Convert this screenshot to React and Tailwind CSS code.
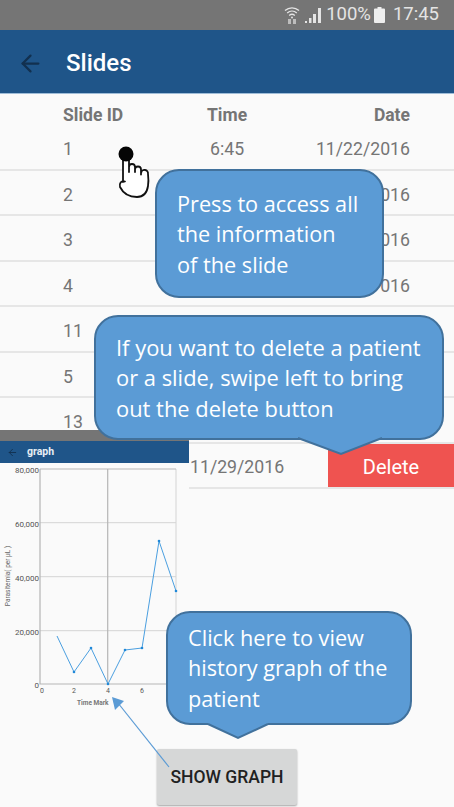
import { ArrowLeft } from "lucide-react";

const roboto = { fontFamily: "Roboto, sans-serif" };

// dates of rows 2-4 are mostly behind the first callout, only the tail shows
const rows = [
  { id: "1", time: "6:45", date: "11/22/2016" },
  { id: "2", date: "016" },
  { id: "3", date: "016" },
  { id: "4", date: "016" },
  { id: "11" },
  { id: "5" },
  { id: "13" },
];

const points = [[57, 636], [74, 672], [91, 648], [108, 684], [125, 650], [142, 648], [159, 541], [176, 591]];

const StatusBar = () => (
  <div className="h-[30px] bg-[#757575] flex items-center justify-end pr-[15px] text-[18.500px] text-[#e4e4e4]">
    <svg width="16" height="20" viewBox="0 0 16 20" fill="none" stroke="#e4e4e4" strokeWidth="1.3" className="mr-[5px]">
      <path d="M1 5.5c4-3.6 10-3.6 14 0M3.2 8c2.8-2.4 6.8-2.4 9.6 0M5.2 10.4c1.700-1.400 3.900-1.400 5.600 0" />
      <path d="M5.500 14v5M10.500 14v5" strokeWidth="3" stroke="#bdbdbd" />
      <circle cx="8" cy="12.500" r="1" fill="#e4e4e4" stroke="none" />
    </svg>
    <svg width="16" height="16" viewBox="0 0 16 16" fill="#e4e4e4" className="mr-[5px]">
      <path d="M0 14h2v2H0zM4 11h2.500v5H4zM8 7h3v9H8zM13 1h3v15h-3z" />
    </svg>
    <span className="mr-[3px]">100%</span>
    <svg width="11" height="16" viewBox="0 0 11 16" fill="#eeeeee" className="mr-[8px]">
      <path d="M3.500 0h4v1.500H10a1 1 0 0 1 1 1V15a1 1 0 0 1-1 1H1a1 1 0 0 1-1-1V2.500a1 1 0 0 1 1-1h2.500z" />
    </svg>
    <span>17:45</span>
  </div>
);

const Bubble = ({ className, textClass, tail, children }) => (
  <div className={`absolute bg-[#5b9bd5] border-2 border-[#41719c] text-white leading-[30.300px] ${className}`} style={{ fontFamily: "'Open Sans', sans-serif" }}>
    <div className={textClass}>{children}</div>
    {tail}
  </div>
);

const Chart = () => (
  <svg width="189" height="290" viewBox="0 463 189 290" className="block" style={roboto}>
    <path d="M40 522.700H176M40 576.700H176M40 630.700H176M176 469V684" stroke="#d4d4d4" strokeWidth="1" fill="none" />
    <path d="M40 469H176M40 469V684H176M107.700 469V684" stroke="#b5b5b5" strokeWidth="1.200" fill="none" />
    <polyline points={points.map((p) => p.join(",")).join(" ")} fill="none" stroke="#4a9fe0" strokeWidth="1" />
    {points.slice(1).map((p) => (
      <circle key={p[0]} cx={p[0]} cy={p[1]} r="1.300" fill="#1f88d8" />
    ))}
    <g fontSize="8" fill="#555" textAnchor="end">
      <text x="39" y="473">80,000</text>
      <text x="39" y="527">60,000</text>
      <text x="39" y="581">40,000</text>
      <text x="39" y="635">20,000</text>
      <text x="39" y="688">0</text>
    </g>
    <g fontSize="7" fill="#555" textAnchor="middle">
      <text x="42" y="693">0</text>
      <text x="74" y="693">2</text>
      <text x="108" y="693">4</text>
      <text x="142" y="693">6</text>
    </g>
    <text x="77" y="705" fontSize="6.500" fontWeight="700" fill="#777">Time Mark</text>
    <text x="0" y="0" fontSize="6.500" fill="#666" textAnchor="middle" transform="translate(10 576) rotate(-90)">Parasitemia( per µL )</text>
  </svg>
);

export default function App() {
  return (
    <div className="relative w-[454px] h-[807px] overflow-hidden bg-[#fafafa]" style={roboto}>
      <StatusBar />
      <div className="h-[64px] bg-[#1f5589] border-b border-[#9fbdd8] flex items-center pl-[17px]">
        <ArrowLeft size={27} strokeWidth={2} className="text-[#12304f] mt-[3px]" />
        <span className="ml-[22px] mt-[2px] text-[24px] font-medium text-white">Slides</span>
      </div>

      <div className="grid grid-cols-[144px_73px_130px] pl-[63px] pt-[8px] h-[31px] text-[17.500px] font-bold text-[#757575]">
        <span>Slide ID</span>
        <span>Time</span>
        <span className="text-right">Date</span>
      </div>
      {rows.map((r) => (
        <div key={r.id} className="h-[45.500px] border-b-2 border-[#e6e6e6] grid grid-cols-[147px_70px_130px] pl-[63px] pt-[11px] text-[17.700px] text-[#757575]">
          <span>{r.id}</span>
          <span>{r.time}</span>
          <span className="text-right">{r.date}</span>
        </div>
      ))}
      <div className="h-[45.500px] border-b-2 border-[#e6e6e6] flex items-center justify-between pl-[190px] text-[17.700px] text-[#757575]">
        <span className="mt-[4px]">11/29/2016</span>
        <div className="w-[126px] h-full bg-[#ef5350] text-[20px] text-white flex items-center justify-center pt-[3px]">Delete</div>
      </div>

      {/* graph screenshot pasted over the list */}
      <div className="absolute left-0 top-[430px] w-[189px]">
        <div className="h-[11px] bg-[#757575]" />
        <div className="h-[22px] bg-[#1f5589] flex items-center pl-[7px] text-[10.500px] font-bold text-[#e8eef4]">
          <ArrowLeft size={11} strokeWidth={2} className="text-[#12304f]" />
          <span className="ml-[9px]">graph</span>
        </div>
        <div className="bg-[#fafafa]">
          <Chart />
        </div>
      </div>

      {/* tap hand */}
      <svg className="absolute left-[110px] top-[140px]" width="45" height="62" viewBox="110 140 45 62" fill="none">
        <path d="M123 182V155a3 3 0 0 1 6 0v17V167a3 3 0 0 1 6 0v5V169.500a3 3 0 0 1 6 0v5V173a3 3 0 0 1 7 1c.500 4 .500 9 0 12-1 7-5 11-11 11-8 0-14-4-17-10-1-3 1-7 5-5.500z" fill="#fff" stroke="#111" strokeWidth="1.800" strokeLinejoin="round" />
        <circle cx="126" cy="154" r="7.500" fill="#050505" />
      </svg>

      <Bubble
        className="left-[155px] top-[169px] w-[229px] h-[129px] rounded-[24px] text-[21.700px]"
        textClass="pl-[20px] pt-[18px]"
      >
        <p>Press to access all</p>
        <p>the information</p>
        <p>of the slide</p>
      </Bubble>

      <Bubble
        className="left-[94px] top-[315px] w-[350px] h-[125px] rounded-[24px] text-[21.900px]"
        textClass="pl-[20px] pt-[16px]"
        tail={
          <svg className="absolute left-[198px] top-[110px]" width="96" height="32" viewBox="0 0 96 32">
            <polygon points="4,11 47,27 88,11 88,0 4,0" fill="#5b9bd5" />
            <polyline points="4,11 47,27 88,11" fill="none" stroke="#41719c" strokeWidth="2" />
          </svg>
        }
      >
        <p>If you want to delete a patient</p>
        <p>or a slide, swipe left to bring</p>
        <p>out the delete button</p>
      </Bubble>

      <Bubble
        className="left-[166px] top-[611px] w-[246px] h-[114px] rounded-[24px] text-[21.700px]"
        textClass="pl-[20px] pt-[10px]"
        tail={
          <svg className="absolute left-[36px] top-[100px]" width="74" height="30" viewBox="0 0 74 30">
            <polygon points="4,11 34,25 64,11 64,0 4,0" fill="#5b9bd5" />
            <polyline points="4,11 34,25 64,11" fill="none" stroke="#41719c" strokeWidth="2" />
          </svg>
        }
      >
        <p>Click here to view</p>
        <p>history graph of the</p>
        <p>patient</p>
      </Bubble>

      <div className="absolute left-[157px] top-[749px] w-[140px] h-[56px] bg-[#d6d7d7] rounded-[2px] shadow-[0_1px_2px_rgba(0,0,0,0.35)] flex items-center justify-center text-[17.500px] font-medium text-[#212121]">
        SHOW GRAPH
      </div>

      {/* arrow from button to the graph, drawn over the button */}
      <svg className="absolute left-[105px] top-[690px]" width="70" height="85" viewBox="105 690 70 85" fill="none">
        <line x1="169" y1="767" x2="118" y2="703" stroke="#5b9bd5" strokeWidth="1.200" />
        <polygon points="112,697 124,701 115,710" fill="#5b9bd5" />
      </svg>
    </div>
  );
}
